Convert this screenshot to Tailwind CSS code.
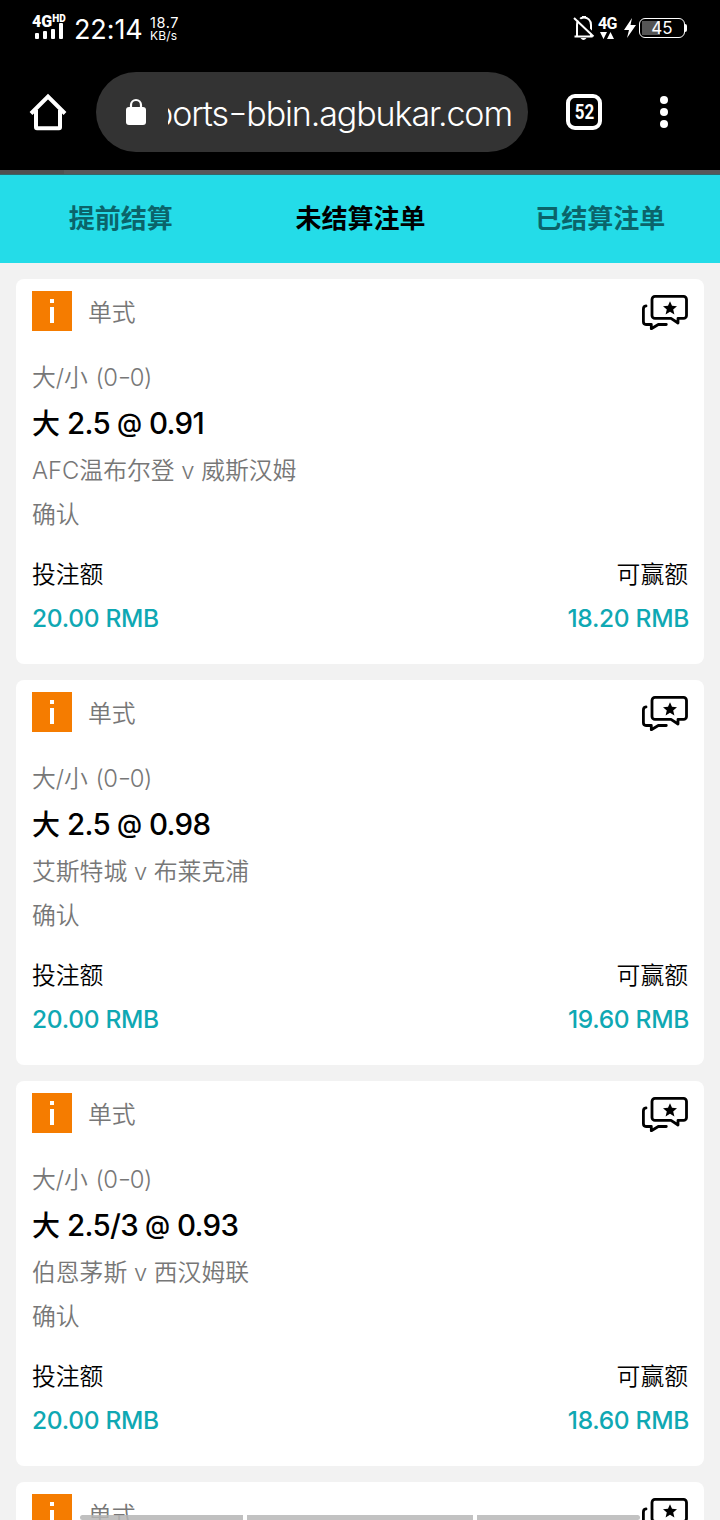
<!DOCTYPE html>
<html lang="zh-CN">
<head>
<meta charset="utf-8">
<title>未结算注单</title>
<script src="https://cdn.jsdelivr.net/npm/@tailwindcss/browser@4"></script>
</head>
<body class="bg-[#f2f2f2] font-['Inter','Noto_Sans_CJK_SC',sans-serif] w-[720px] h-[1520px] overflow-hidden">
<svg class="hidden">
  <symbol id="chat" viewBox="0 0 48 36">
    <path d="M14.500 2.400h28.500a3 3 0 0 1 3 3v16a3 3 0 0 1-3 3h-5.500v4.600l-7-4.600h-16a3 3 0 0 1-3-3v-16a3 3 0 0 1 3-3z" transform="translate(.5 0)" fill="none" stroke="#000" stroke-width="2.800" stroke-linejoin="round"/>
    <path d="M6 11.800C4 12 3.400 13.500 3.400 15v12.500c0 2 .8 3 2.600 3h5.300v4.200l7-4.200h8" fill="none" stroke="#000" stroke-width="2.800" stroke-linecap="round" stroke-linejoin="round"/>
    <path d="M30 7.200l2 4.600 5 .4-3.800 3.300 1.200 4.900-4.400-2.600-4.400 2.600 1.200-4.900-3.800-3.300 5-.4z" fill="#000"/>
  </symbol>
</svg>
<div class="relative flex h-[1520px] flex-col overflow-hidden">
  <header class="h-[175px] shrink-0 bg-black text-white">
    <div class="flex h-14 items-start pl-8 pr-8">
      <div class="w-[36px] pt-[14px]">
        <div class="flex h-[14px] items-start whitespace-nowrap font-['Roboto'] font-black leading-none">
          <span class="text-[16px] leading-[15px]">4G</span><span class="text-[10px] leading-[9px]">HD</span>
        </div>
        <svg class="-mt-[6px] block" width="36" height="18" viewBox="0 0 36 18" fill="#fff"><rect x="3" y="11" width="4" height="6" rx="1"/><rect x="11" y="9" width="4" height="8" rx="1"/><rect x="19" y="7" width="4" height="10" rx="1"/><rect x="27" y="1" width="4" height="16" rx="1"/></svg>
      </div>
      <div class="ml-[6px] mt-[14px] w-[72px] whitespace-nowrap text-[27px] leading-8 tracking-[-0.1px]">22:14</div>
      <div class="ml-[4px] mt-4 whitespace-nowrap text-[14.500px] leading-[13px]"><div class="tracking-[0.6px]">18.7</div><div class="text-[12px] tracking-[0.2px]">KB/s</div></div>
      <div class="ml-auto flex">
        <svg class="mt-[14px]" width="24" height="28" viewBox="0 0 24 28"><path d="M3.500 22V11c0-10 14-10 14 0v11M1 22.500h18" transform="translate(.5 0)" fill="none" stroke="#fff" stroke-width="2"/><path d="M9 2h4v2H9zM7.500 24h6q-3 4-6 0z" fill="#fff"/><path d="M3.500 3l19 19" stroke="#000" stroke-width="2.500"/><path d="M1 4l19.500 18.500" stroke="#fff" stroke-width="2"/></svg>
        <div class="ml-px mt-4 w-[19px]"><div class="font-['Roboto'] text-[16px] font-bold leading-[15px] tracking-[-0.6px]">4G</div><svg class="block" width="20" height="9" viewBox="0 0 20 9" fill="#fff"><path d="M2 1h7L5.500 8zM9 8h7L12.500 1z"/></svg></div>
        <svg class="ml-[7px] mt-[18px]" width="14" height="20" viewBox="0 0 14 20"><path d="M8 0L0 12h5L3 20 12 7H6.500z" fill="#fff"/></svg>
        <div class="ml-px mt-[18px] flex h-5 w-[46px] shrink-0 items-center justify-center rounded-[6px] border border-white bg-[linear-gradient(90deg,#555_18px,transparent_18px)] bg-[position:2px_2px] bg-[size:40px_14px] bg-no-repeat text-[17px] leading-none">45</div>
        <div class="mr-px mt-[24px] h-2 w-0.5 rounded-r bg-white"></div>
      </div>
    </div>
    <div class="flex h-[114px] items-start pt-4">
      <svg class="ml-7 mt-[20px]" width="40" height="40" viewBox="0 0 40 40"><path d="M3 21.500L20 4.500l17 17" fill="none" stroke="#fff" stroke-width="4"/><path d="M8 18v17.200a1 1 0 0 0 1 1h22a1 1 0 0 0 1-1V18" fill="none" stroke="#fff" stroke-width="4"/></svg>
      <div class="ml-7 flex h-20 w-[432px] items-center rounded-full bg-[#333]">
        <svg class="ml-[30px]" width="20" height="28" viewBox="0 0 20 28"><path d="M5 10V7a5 5 0 0 1 10 0v3" fill="none" stroke="#fff" stroke-width="2.200"/><rect y="9" width="20" height="18" rx="3" fill="#fff"/></svg>
        <div class="ml-[22px] mt-1 flex w-[344px] justify-end overflow-hidden whitespace-nowrap text-[34px] font-light leading-[48px] tracking-[-1.1px]">sports<span class="inline-block origin-center -translate-y-px scale-x-125 px-[2px]">-</span>bbin.agbukar.com</div>
      </div>
      <div class="ml-[38px] mt-[22px] flex size-9 items-center justify-center rounded-[9px] border-4 border-white font-['Roboto'] text-[20px] font-bold leading-none"><span class="scale-x-[.85]">52</span></div>
      <svg class="ml-14 mt-6" width="12" height="32" viewBox="0 0 12 32" fill="#fff"><circle cx="6" cy="4" r="4"/><circle cx="6" cy="16" r="4"/><circle cx="6" cy="28" r="4"/></svg>
    </div>
    <div class="flex h-[5px] border-b border-[#35686b] bg-[#585858]"><div class="w-16 bg-[#505050]"></div></div>
  </header>
  <nav class="grid h-[88px] shrink-0 grid-cols-3 bg-[#24dce8] pl-px text-center text-[26px] font-bold leading-[87px] text-[#0b646a]">
    <div>提前结算</div><div class="text-black">未结算注单</div><div>已结算注单</div>
  </nav>
  <main id="list" class="flex flex-col gap-4 px-4 pt-4"></main>
  <div class="absolute left-20 top-[1515px] flex h-[5px] w-[560px] gap-1"><div class="w-[163px] rounded-l bg-[#b5b5b5]/85"></div><div class="w-[226px] bg-[#c2c2c2]"></div><div class="w-[163px] rounded-r bg-[#c2c2c2]"></div></div>
</div>
<script>
const bets = [
  ['2.5', '0.91', 'AFC温布尔登', '威斯汉姆', '18.20'],
  ['2.5', '0.98', '艾斯特城', '布莱克浦', '19.60'],
  ['2.5/3', '0.93', '伯恩茅斯', '西汉姆联', '18.60'],
  ['2.5', '0.90', '', '', '18.00']
];
document.getElementById('list').innerHTML = bets.map(([line, odds, home, away, win]) => `
<section class="h-[385px] shrink-0 rounded-lg bg-white px-4 text-[23.800px] font-[350] text-[#777]">
  <div class="flex h-[77px] items-start pt-[11.600px]">
    <div class="flex size-10 flex-col items-center gap-1 bg-[#f57c00] pt-2"><i class="block size-1 bg-white"></i><i class="block h-4 w-1 bg-white"></i></div>
    <div class="ml-4 leading-[43px]">单式</div>
    <svg class="ml-auto mt-[3px]" width="48" height="36"><use href="#chat"/></svg>
  </div>
  <div class="h-11 leading-[44px]">大/小 <span class="ml-px font-light tracking-[-0.5px]">(0<span class="inline-block -translate-y-px scale-x-125 px-[1px]">-</span>0)</span></div>
  <div class="flex h-12 items-baseline text-[29.500px] font-medium leading-[46px] tracking-[-0.7px] text-black"><span class="mr-[7px] text-[28px] tracking-normal">大</span>${line}<span class="mx-[7px] inline-block -translate-y-0.5 text-[25.500px] leading-none tracking-normal">@</span>${odds}</div>
  <div class="h-[46px] whitespace-nowrap leading-[46px]">${home}<span class="font-light"> v </span>${away}</div>
  <div class="h-[59px] leading-[42px]">确认</div>
  <div class="flex h-11 justify-between leading-[44px] text-black"><span>投注额</span><span>可赢额</span></div>
  <div class="flex h-11 justify-between text-[24.500px] font-medium leading-[42px] tracking-[-0.3px] text-[#0fa8b3]"><span>20.00 RMB</span><span class="-mr-px">${win} RMB</span></div>
</section>`).join('');
</script>
</body>
</html>
